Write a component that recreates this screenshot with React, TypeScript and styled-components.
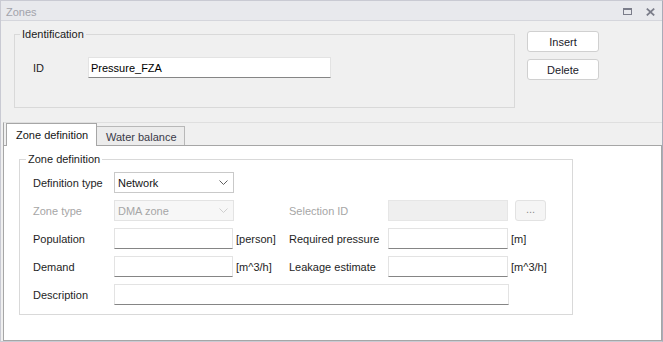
import React from 'react';
import styled, { createGlobalStyle } from 'styled-components';

const Global = createGlobalStyle`
  html, body { margin: 0; padding: 0; background: #ffffff; }
  body { font-family: "Liberation Sans", Arial, sans-serif; font-size: 11px; }
  * { box-sizing: border-box; }
`;

const Window = styled.div`
  width: 663px;
  height: 342px;
  background: #f0f0f0;
  border: 1px solid #c9cad3;
  border-right-color: #a9abb8;
  display: flex;
  flex-direction: column;
  color: #1e1e1e;
  font-family: "Liberation Sans", Arial, sans-serif;
  font-size: 11px;
`;

const TitleBar = styled.div`
  height: 20px;
  flex: none;
  background: #e8e9ed;
  border-bottom: 1px solid #d5d6dc;
  display: flex;
  align-items: center;
  justify-content: space-between;
  padding: 0 7px 0 5px;
`;

const Title = styled.span`
  color: #a2a3ab;
  line-height: 13px;
  padding-top: 3px;
`;

const TitleIcons = styled.div`
  display: flex;
  align-items: center;
  gap: 14px;
  padding-top: 2px;
`;

const TopRow = styled.div`
  flex: none;
  display: flex;
  align-items: flex-start;
  padding: 10px 0 0 13px;
`;

const GroupBox = styled.div<{ $w: number; $h?: number }>`
  position: relative;
  width: ${p => p.$w}px;
  ${p => (p.$h ? `height: ${p.$h}px;` : '')}
  border: 1px solid #d9d9d9;
`;

const Legend = styled.span<{ $bg: string; $left: number }>`
  position: absolute;
  top: -7px;
  left: ${p => p.$left}px;
  padding: 0 2px;
  line-height: 13px;
  background: ${p => p.$bg};
  color: #1a1a1a;
`;

const IdGroup = styled(GroupBox)`
  margin-top: 3px;
  padding: 22px 0 0 18px;
`;

const IdRow = styled.div`
  display: flex;
  align-items: center;
`;

const IdLabel = styled.span`
  width: 55px;
`;

const ButtonColumn = styled.div`
  display: flex;
  flex-direction: column;
  gap: 7px;
  margin-left: 12px;
`;

const PushButton = styled.button`
  width: 72px;
  height: 21px;
  background: #ffffff;
  border: 1px solid #d0d0d0;
  border-radius: 3px;
  font: inherit;
  color: #1a1a2a;
  padding: 0;
`;

const TabArea = styled.div`
  flex: 1;
  margin: 14px 0 0 2px;
  display: flex;
  flex-direction: column;
  border-top: 1px solid #dfdfdf;
  border-left: 1px solid #a6a6a6;
  border-bottom: 1px solid #a6a6a6;
`;

const TabStrip = styled.div`
  height: 22px;
  flex: none;
  display: flex;
  align-items: flex-end;
  padding-left: 2px;
`;

const Tab = styled.div<{ $active?: boolean; $w: number }>`
  position: relative;
  width: ${p => p.$w}px;
  display: flex;
  align-items: center;
  border: 1px solid ${p => (p.$active ? '#a6a6a6' : '#b8b8b8')};
  border-bottom: none;
  ${p =>
    p.$active
      ? `height: 23px; margin-bottom: -1px; z-index: 1; background: #ffffff; padding: 0 0 1px 9px; color: #141414;`
      : `height: 19px; margin-left: -1px; background: #ececec; padding: 1px 0 0 9px; color: #3a3a48;`}
`;

const Panel = styled.div`
  flex: 1;
  background: #ffffff;
  border-top: 1px solid #a6a6a6;
  border-right: 1px solid #a6a6a6;
  padding: 13px 0 0 15px;
`;

const ZoneGroup = styled(GroupBox)`
  padding: 12px 0 9px 13px;
`;

const FieldGrid = styled.div`
  display: grid;
  grid-template-columns: 81px 120px 55px 99px 121px auto;
  grid-auto-rows: 21px;
  row-gap: 7px;
  align-items: center;
`;

const Label = styled.span<{ $disabled?: boolean }>`
  color: ${p => (p.$disabled ? '#a6a6a6' : '#1e1e1e')};
  white-space: nowrap;
`;

const Unit = styled.span`
  padding-left: 2px;
  white-space: nowrap;
`;

const TextInput = styled.input<{ $w: number; $h?: number }>`
  width: ${p => p.$w}px;
  height: ${p => p.$h ?? 21}px;
  border: 1px solid #e3e3e3;
  border-bottom-color: #858585;
  background: #ffffff;
  padding: 0 2px;
  font: inherit;
  color: #000000;
  outline: none;
  &:disabled {
    background: #efefef;
    border-color: #e6e6e6;
  }
`;

const SelectBox = styled.div<{ $disabled?: boolean }>`
  width: 120px;
  height: 21px;
  display: flex;
  align-items: center;
  justify-content: space-between;
  padding: 0 5px 0 3px;
  border: 1px solid ${p => (p.$disabled ? '#e3e3e3' : '#c9c9c9')};
  background: ${p => (p.$disabled ? '#f7f7f7' : '#ffffff')};
  color: ${p => (p.$disabled ? '#a6a6a6' : '#141414')};
`;

const Wide = styled.div`
  grid-column: 2 / 6;
`;

const UnitCell = styled.div`
  display: flex;
  align-items: center;
`;

const BrowseButton = styled.button`
  width: 31px;
  height: 21px;
  margin-left: 6px;
  padding: 0 0 3px;
  border: 1px solid #e2e2e2;
  border-radius: 3px;
  background: #f5f5f5;
  color: #8c8c8c;
  font: inherit;
`;

const Chevron = ({ disabled }: { disabled?: boolean }) => (
  <svg width="9" height="5" viewBox="0 0 9 5">
    <polyline
      points="0.5,0.5 4.5,4.5 8.5,0.5"
      fill="none"
      stroke={disabled ? '#cfcfcf' : '#606060'}
      strokeWidth="1"
    />
  </svg>
);

const Select = ({ value, disabled }: { value: string; disabled?: boolean }) => (
  <SelectBox $disabled={disabled}>
    <span>{value}</span>
    <Chevron disabled={disabled} />
  </SelectBox>
);

export default function App() {
  return (
    <>
      <Global />
      <Window>
        <TitleBar>
          <Title>Zones</Title>
          <TitleIcons>
            <svg width="9" height="7" viewBox="0 0 9 7">
              <rect x="0.5" y="1" width="8" height="5.5" fill="none" stroke="#7b7d8a" strokeWidth="1" />
              <rect x="0" y="0" width="9" height="2" fill="#7b7d8a" />
            </svg>
            <svg width="9" height="8" viewBox="0 0 9 8">
              <path d="M0.8 0.6 L8.2 7.4 M8.2 0.6 L0.8 7.4" stroke="#7b7d8a" strokeWidth="1.8" />
            </svg>
          </TitleIcons>
        </TitleBar>

        <TopRow>
          <IdGroup $w={501} $h={74}>
            <Legend $bg="#f0f0f0" $left={5}>Identification</Legend>
            <IdRow>
              <IdLabel>ID</IdLabel>
              <TextInput $w={243} defaultValue="Pressure_FZA" />
            </IdRow>
          </IdGroup>
          <ButtonColumn>
            <PushButton>Insert</PushButton>
            <PushButton>Delete</PushButton>
          </ButtonColumn>
        </TopRow>

        <TabArea>
          <TabStrip>
            <Tab $active $w={91}>Zone definition</Tab>
            <Tab $w={89}>Water balance</Tab>
          </TabStrip>
          <Panel>
            <ZoneGroup $w={554}>
              <Legend $bg="#ffffff" $left={6}>Zone definition</Legend>
              <FieldGrid>
                <Label>Definition type</Label>
                <Select value="Network" />
                <span />
                <span />
                <span />
                <span />

                <Label $disabled>Zone type</Label>
                <Select value="DMA zone" disabled />
                <span />
                <Label $disabled>Selection ID</Label>
                <TextInput $w={120} disabled />
                <UnitCell>
                  <BrowseButton>...</BrowseButton>
                </UnitCell>

                <Label>Population</Label>
                <TextInput $w={119} />
                <Unit>[person]</Unit>
                <Label>Required pressure</Label>
                <TextInput $w={120} />
                <Unit>[m]</Unit>

                <Label>Demand</Label>
                <TextInput $w={119} />
                <Unit>[m^3/h]</Unit>
                <Label>Leakage estimate</Label>
                <TextInput $w={120} />
                <Unit>[m^3/h]</Unit>

                <Label>Description</Label>
                <Wide>
                  <TextInput $w={395} />
                </Wide>
              </FieldGrid>
            </ZoneGroup>
          </Panel>
        </TabArea>
      </Window>
    </>
  );
}
